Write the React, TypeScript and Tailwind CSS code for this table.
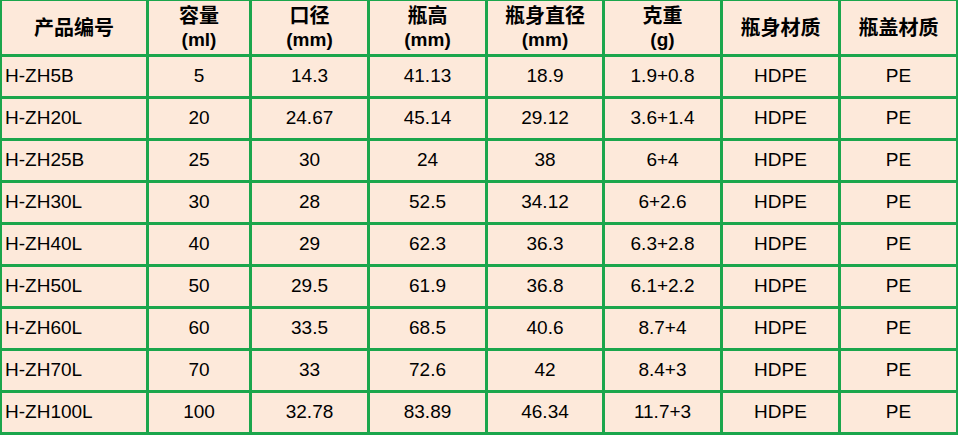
import React from 'react';

const headers: string[][] = [
  ['产品编号'],
  ['容量', '(ml)'],
  ['口径', '(mm)'],
  ['瓶高', '(mm)'],
  ['瓶身直径', '(mm)'],
  ['克重', '(g)'],
  ['瓶身材质'],
  ['瓶盖材质'],
];

const rows: string[][] = [
  ['H-ZH5B', '5', '14.3', '41.13', '18.9', '1.9+0.8', 'HDPE', 'PE'],
  ['H-ZH20L', '20', '24.67', '45.14', '29.12', '3.6+1.4', 'HDPE', 'PE'],
  ['H-ZH25B', '25', '30', '24', '38', '6+4', 'HDPE', 'PE'],
  ['H-ZH30L', '30', '28', '52.5', '34.12', '6+2.6', 'HDPE', 'PE'],
  ['H-ZH40L', '40', '29', '62.3', '36.3', '6.3+2.8', 'HDPE', 'PE'],
  ['H-ZH50L', '50', '29.5', '61.9', '36.8', '6.1+2.2', 'HDPE', 'PE'],
  ['H-ZH60L', '60', '33.5', '68.5', '40.6', '8.7+4', 'HDPE', 'PE'],
  ['H-ZH70L', '70', '33', '72.6', '42', '8.4+3', 'HDPE', 'PE'],
  ['H-ZH100L', '100', '32.78', '83.89', '46.34', '11.7+3', 'HDPE', 'PE'],
];

// CJK lines get a slightly bigger size than the latin unit lines
const isCjk = (s: string) => /[\u4e00-\u9fff]/.test(s);

const App: React.FC = () => {
  return (
    <div className="w-[958px] h-[435px] bg-[#1ba64c] pt-px pl-[2px] pr-[2px] pb-[3px] font-['Liberation_Sans','Noto_Sans_CJK_SC',sans-serif] text-black">
      <div className="grid grid-cols-[144px_100px_115px_115px_114px_115px_115px_115px] grid-rows-[53px_repeat(9,39px)] gap-[3px]">
        {headers.map((h, i) => (
          <div
            key={'h' + i}
            className="bg-[#fde9da] flex flex-col items-center justify-center font-bold leading-[24px]"
          >
            {h.map((line, j) => (
              <span key={j} className={isCjk(line) ? 'text-[20px]' : 'text-[19px]'}>
                {line}
              </span>
            ))}
          </div>
        ))}
        {rows.map((r, ri) =>
          r.map((cell, ci) => (
            <div
              key={ri + '-' + ci}
              className={
                ci === 0
                  ? 'bg-[#fde9da] flex items-center pl-[3px] text-[19px]'
                  : 'bg-[#fde9da] flex items-center justify-center text-[19px]'
              }
            >
              {cell}
            </div>
          ))
        )}
      </div>
    </div>
  );
};

export default App;
